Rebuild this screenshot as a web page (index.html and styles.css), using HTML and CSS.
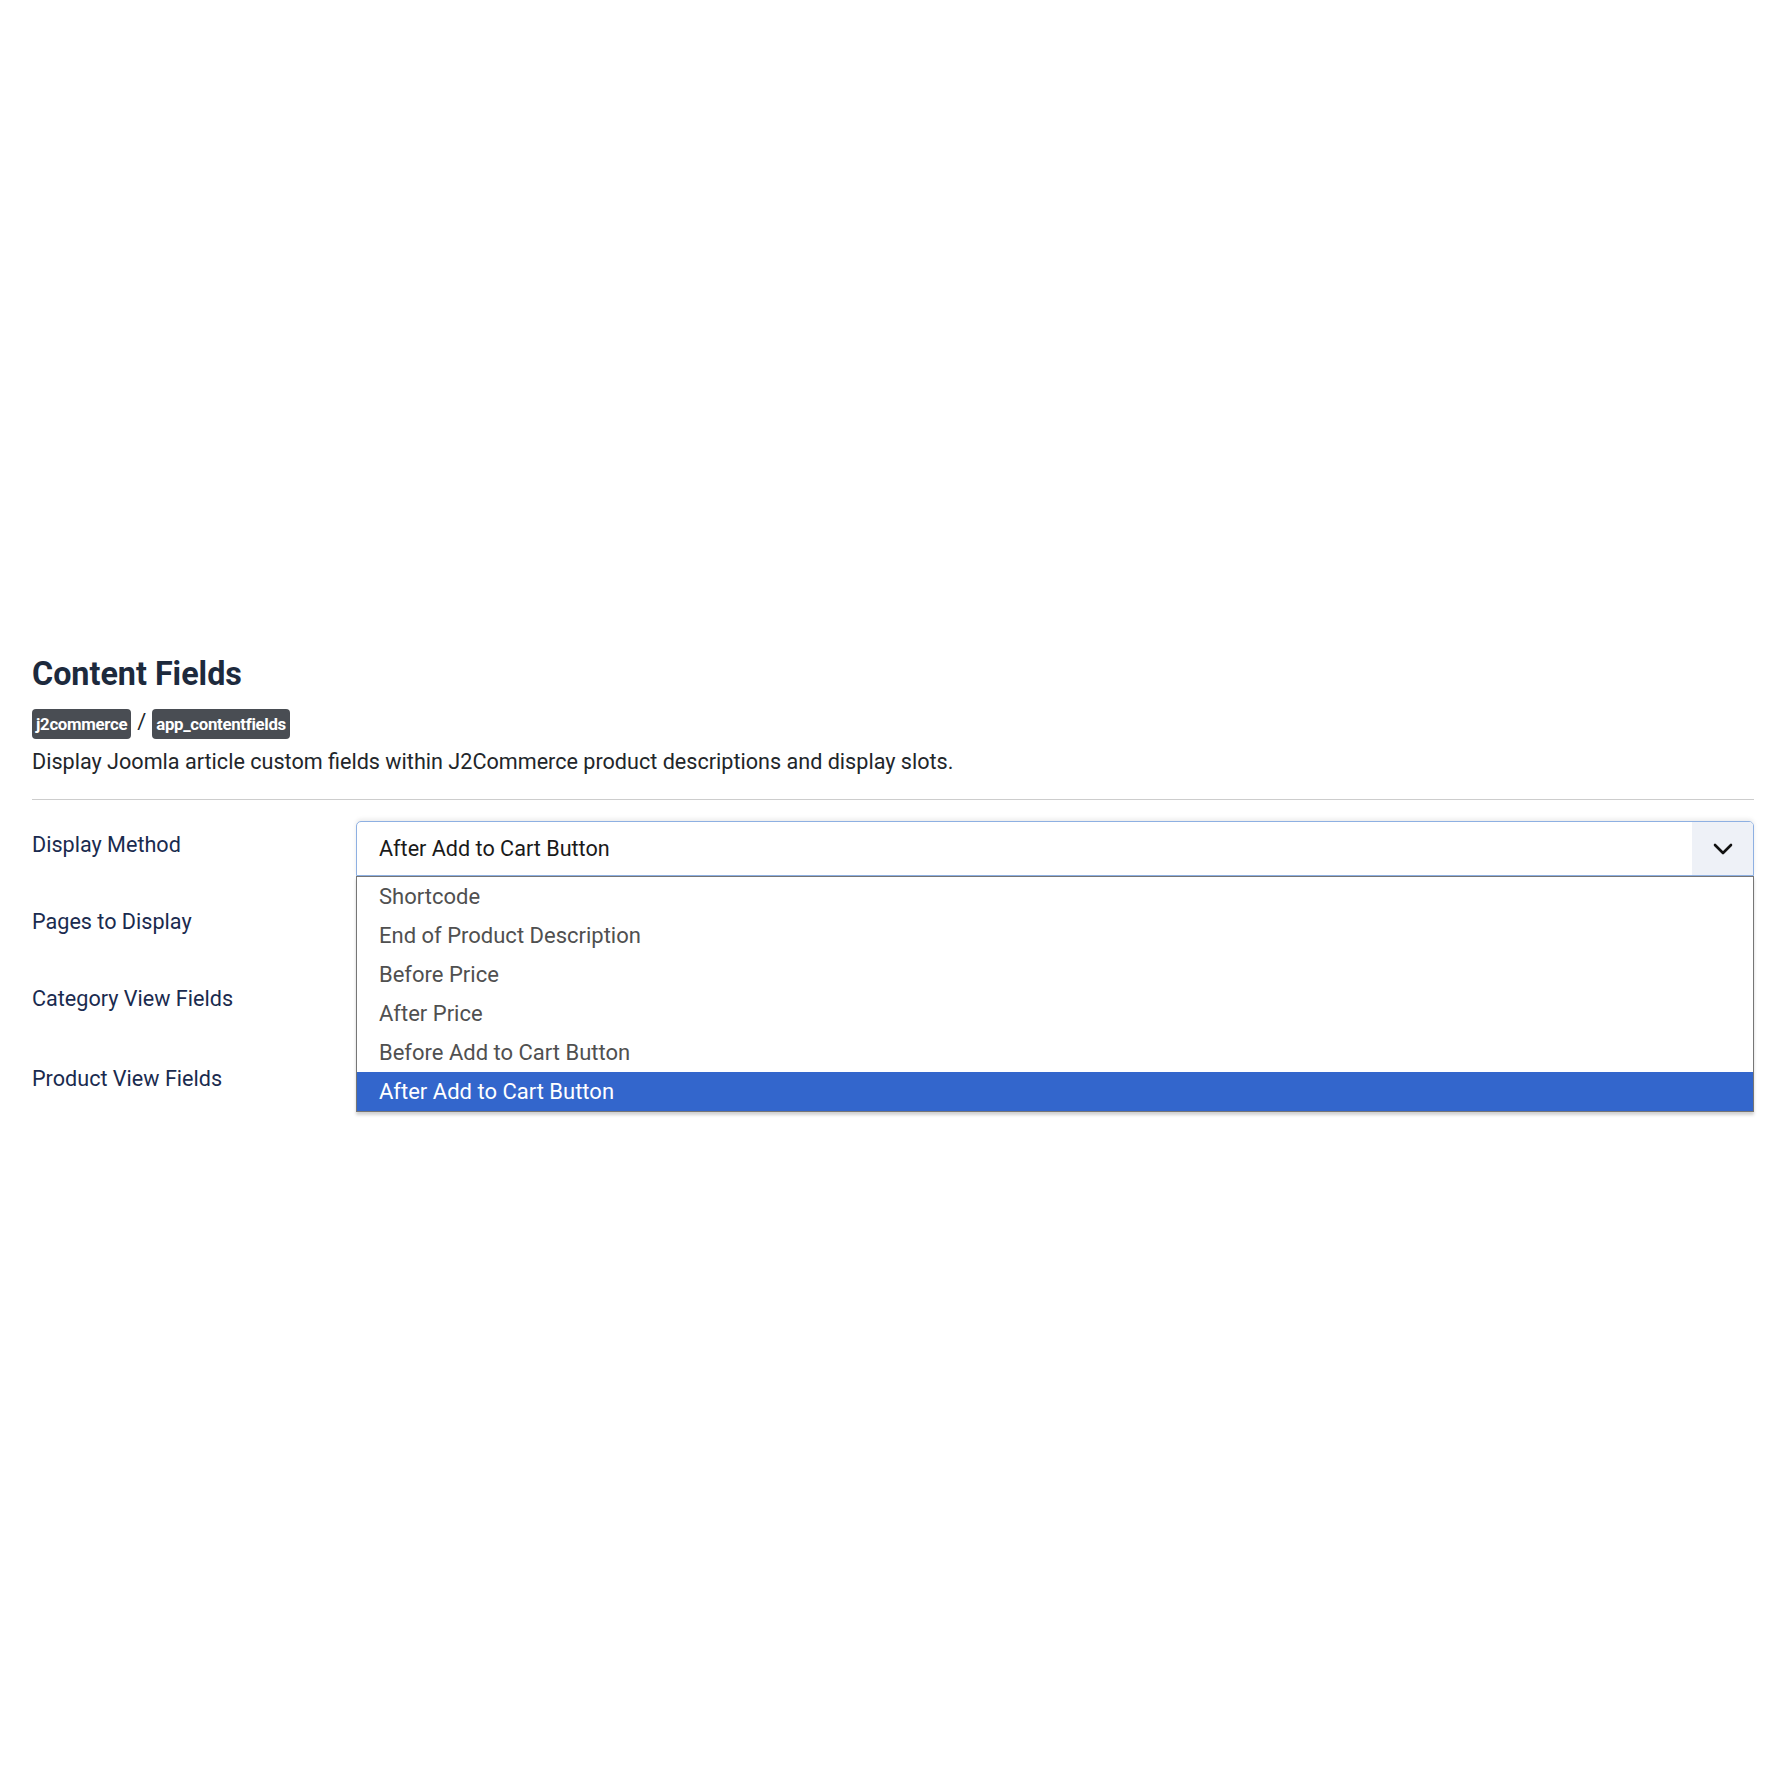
FILE: index.html
```html
<!DOCTYPE html>
<html lang="en">

<head>
  <meta charset="UTF-8">
  <title>Content Fields</title>
  <meta name="viewport" content="width=device-width, initial-scale=1.0" />
  <link rel="stylesheet" href="styles.css">
</head>

<body>
  <div class="page">
    <h1 class="title">Content Fields</h1>

    <div class="tags">
      <span class="badge">j2commerce</span>
      <span class="sep">/</span>
      <span class="badge">app_contentfields</span>
    </div>

    <p class="desc">Display Joomla article custom fields within J2Commerce product descriptions and display slots.</p>

    <hr class="rule">

    <div class="form">
      <div class="row">
        <label class="label">Display Method</label>
        <div class="control">
          <div class="select">
            <span class="value">After Add to Cart Button</span>
            <span class="arrow">
              <svg width="20" height="12" viewBox="0 0 20 12">
                <path d="M2 2 L10 10 L18 2" fill="none" stroke="#111" stroke-width="2.6" stroke-linecap="round" stroke-linejoin="round" />
              </svg>
            </span>
          </div>
          <!-- open option list, drawn over the rows below -->
          <ul class="options">
            <li>Shortcode</li>
            <li>End of Product Description</li>
            <li>Before Price</li>
            <li>After Price</li>
            <li>Before Add to Cart Button</li>
            <li class="selected">After Add to Cart Button</li>
          </ul>
        </div>
      </div>

      <div class="row">
        <label class="label">Pages to Display</label>
        <div class="control"></div>
      </div>

      <div class="row">
        <label class="label">Category View Fields</label>
        <div class="control"></div>
      </div>

      <div class="row last">
        <label class="label">Product View Fields</label>
        <div class="control"></div>
      </div>
    </div>
  </div>
</body>

</html>
```

FILE: styles.css
```css
* {
  box-sizing: border-box;
}

body {
  margin: 0;
  font-family: Roboto, "Liberation Sans", Arial, sans-serif;
  background: #fff;
  color: #22262a;
}

.page {
  padding: 656px 13px 200px 32px;
}

.title {
  margin: 0;
  font-size: 32.3px;
  line-height: 37px;
  font-weight: 700;
  color: #1d2a3d;
}

.tags {
  display: flex;
  align-items: center;
  gap: 6px;
  margin-top: 16px;
  height: 30px;
}

.badge {
  display: inline-block;
  height: 30px;
  line-height: 30px;
  padding: 0 4px;
  border-radius: 4px;
  background: #494d53;
  color: #fff;
  font-size: 16.8px;
  font-weight: 700;
  letter-spacing: -0.3px;
}

.sep {
  font-size: 22px;
  color: #22262a;
  margin-top: -6px;
}

.desc {
  margin: 8px 0 0;
  font-size: 21.6px;
  line-height: 30px;
  color: #22262a;
}

.rule {
  margin: 22px 0 0;
  border: 0;
  border-top: 1px solid #cdcdcd;
}

.form {
  margin-top: 21px;
}

.row {
  display: flex;
  height: 77px;
}

.row.last {
  margin-top: 3px;
}

.label {
  width: 324px;
  flex-shrink: 0;
  padding-top: 7px;
  font-size: 21.6px;
  line-height: 33px;
  color: #1a2b4f;
}

.control {
  position: relative;
  flex: 1;
}

.select {
  display: flex;
  height: 55px;
  border: 1px solid #8eb0e2;
  border-radius: 5px 5px 0 0;
  background: #fff;
  box-shadow: 0 -2px 4px rgba(0, 0, 0, 0.08);
  overflow: hidden;
}

.select .value {
  flex: 1;
  padding-left: 22px;
  font-size: 21.6px;
  line-height: 53px;
  color: #1a1a1a;
}

.select .arrow {
  width: 61px;
  display: flex;
  align-items: center;
  justify-content: center;
  background: #eef1f7;
}

.options {
  position: absolute;
  top: 55px;
  left: 0;
  right: 0;
  margin: 0;
  padding: 0;
  list-style: none;
  background: #fff;
  border: 1px solid #767676;
  box-shadow: 0 3px 3px rgba(0, 0, 0, 0.18);
  z-index: 2;
}

.options li {
  height: 39px;
  line-height: 39px;
  padding-left: 22px;
  font-size: 22px;
  color: #505050;
}

.options li.selected {
  background: #3366cc;
  color: #fff;
}
```
